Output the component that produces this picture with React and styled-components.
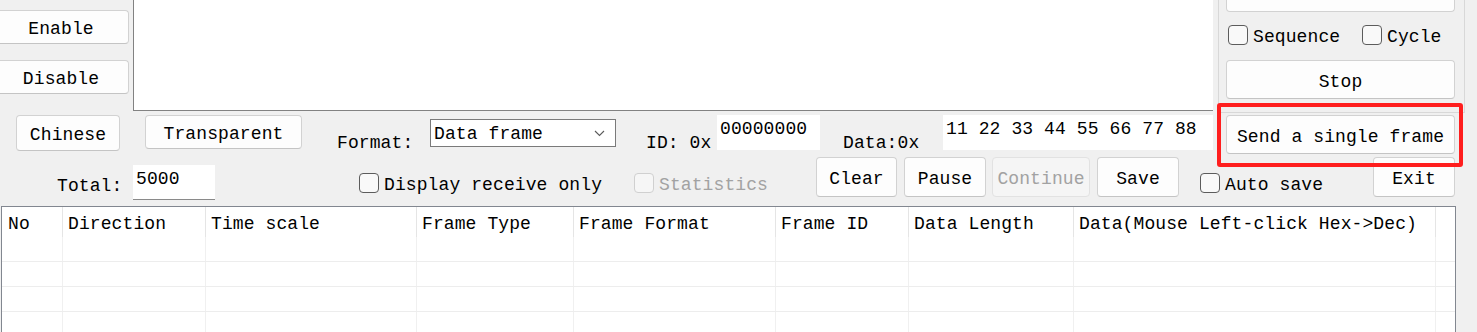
import React from "react";
import styled, { createGlobalStyle } from "styled-components";

const GlobalStyle = createGlobalStyle`
  html, body {
    margin: 0;
    padding: 0;
    background: #f0f0f0;
  }
  body {
    font-family: "Liberation Mono", "Courier New", monospace;
    font-size: 18px;
    letter-spacing: 0.1px;
    color: #000;
  }
`;

const Window = styled.div`
  position: relative;
  width: 1477px;
  height: 332px;
  overflow: hidden;
  background: #f0f0f0;
`;

const TopSection = styled.div`
  display: flex;
  height: 113px;
`;

const SideButtons = styled.div`
  width: 133px;
  flex: none;
  display: flex;
  flex-direction: column;
  gap: 16px;
  padding-top: 10px;
  box-sizing: border-box;
`;

const Button = styled.button`
  box-sizing: border-box;
  flex: none;
  display: flex;
  align-items: center;
  justify-content: center;
  font: inherit;
  letter-spacing: inherit;
  width: ${(p) => p.$w}px;
  height: ${(p) => p.$h || 36}px;
  margin-left: ${(p) => p.$ml || 0}px;
  margin-top: ${(p) => p.$mt || 0}px;
  padding: 4px 0 0;
  background: ${(p) => (p.disabled ? "#f5f5f5" : "#fdfdfd")};
  border: 1px solid ${(p) => (p.disabled ? "#e2e2e2" : "#d2d2d2")};
  border-bottom-color: ${(p) => (p.disabled ? "#e2e2e2" : "#c4c4c4")};
  border-radius: 4px;
  color: ${(p) => (p.disabled ? "#a2a2a2" : "#000")};
  line-height: 20px;
`;

const LogPanel = styled.div`
  flex: none;
  width: 1080px;
  height: 111px;
  box-sizing: border-box;
  background: #fff;
  border-left: 1px solid #828282;
  border-bottom: 1px solid #828282;
`;

const SendGroup = styled.div`
  flex: none;
  margin-left: 5px;
  width: 247px;
  height: 113px;
  box-sizing: border-box;
  border: 1px solid #d8d8d8;
  border-top: none;
  padding-left: 7px;
`;

const TopStub = styled.div`
  width: 229px;
  height: 12px;
  box-sizing: border-box;
  background: #fdfdfd;
  border: 1px solid #d2d2d2;
  border-top: none;
  border-radius: 0 0 4px 4px;
`;

const CheckRow = styled.div`
  display: flex;
  margin-top: 13px;
  height: 20px;
`;

const CheckLabel = styled.label`
  flex: none;
  display: flex;
  align-items: flex-start;
  gap: 5px;
  width: ${(p) => (p.$w ? `${p.$w}px` : "auto")};
  margin-left: ${(p) => p.$ml || 0}px;
  margin-top: ${(p) => p.$mt || 0}px;
  height: 20px;
  white-space: nowrap;
  color: ${(p) => (p.$disabled ? "#a2a2a2" : "#000")};
`;

const CheckText = styled.span`
  padding-top: 2px;
  line-height: 20px;
`;

const Box = styled.span`
  flex: none;
  width: 20px;
  height: 20px;
  box-sizing: border-box;
  border: 1px solid ${(p) => (p.$disabled ? "#d0d0d0" : "#5c5c5c")};
  border-radius: 4px;
  background: ${(p) => (p.$disabled ? "#f6f6f6" : "#f9f9f9")};
`;

const Row = styled.div`
  display: flex;
  align-items: flex-start;
  height: ${(p) => p.$h}px;
`;

const Label = styled.span`
  flex: none;
  width: ${(p) => p.$w}px;
  margin-left: ${(p) => p.$ml || 0}px;
  margin-top: ${(p) => p.$mt || 0}px;
  line-height: 20px;
  white-space: nowrap;
`;

const Field = styled.div`
  flex: none;
  box-sizing: border-box;
  width: ${(p) => p.$w}px;
  height: 35px;
  margin-left: ${(p) => p.$ml || 0}px;
  margin-top: ${(p) => p.$mt || 0}px;
  padding: 4px 0 0 3px;
  background: #fff;
  border-bottom: 1px solid ${(p) => (p.$line ? "#8a8a8a" : "#fff")};
  line-height: 20px;
  white-space: pre;
`;

const Select = styled.div`
  flex: none;
  box-sizing: border-box;
  display: flex;
  align-items: center;
  justify-content: space-between;
  width: 186px;
  height: 28px;
  margin-top: 6px;
  padding: 2px 10px 0 3px;
  background: #fff;
  border: 1px solid #7a7a7a;
  line-height: 20px;
`;

const Chevron = styled.svg`
  margin-top: -2px;
`;

const Highlight = styled.div`
  position: absolute;
  left: 1217px;
  top: 103px;
  width: 246px;
  height: 64px;
  box-sizing: border-box;
  border: 4px solid #ff1e1e;
  border-radius: 3px;
  pointer-events: none;
`;

const cols = "60px 143px 211px 157px 202px 133px 165px 362px 1fr";

const Table = styled.div`
  margin-left: 1px;
  width: 1455px;
  height: 130px;
  box-sizing: border-box;
  background: #fff;
  border: 1px solid #828790;
  border-bottom: none;
`;

const HeaderRow = styled.div`
  display: grid;
  grid-template-columns: ${cols};
  height: 30px;
`;

const HeadCell = styled.div`
  padding: 3px 0 0 ${(p) => (p.$first ? 6 : 5)}px;
  border-left: ${(p) => (p.$first ? "none" : "1px solid #e5e5e5")};
  line-height: 28px;
  white-space: nowrap;
  overflow: hidden;
`;

const BodyRow = styled.div`
  display: grid;
  grid-template-columns: ${cols};
  height: 25px;
  box-sizing: border-box;
  border-bottom: 1px solid #ededed;
`;

const BodyCell = styled.div`
  border-left: ${(p) => (p.$first ? "none" : "1px solid #f0f0f0")};
`;

const headers = [
  "No",
  "Direction",
  "Time scale",
  "Frame Type",
  "Frame Format",
  "Frame ID",
  "Data Length",
  "Data(Mouse Left-click Hex->Dec)",
  "",
];

function Check({ children, disabled, ...rest }) {
  return (
    <CheckLabel $disabled={disabled} {...rest}>
      <Box $disabled={disabled} />
      <CheckText>{children}</CheckText>
    </CheckLabel>
  );
}

export default function App() {
  return (
    <Window>
      <GlobalStyle />
      <TopSection>
        <SideButtons>
          <Button $w={136} $h={34} $ml={-7}>Enable</Button>
          <Button $w={136} $h={34} $ml={-7}>Disable</Button>
        </SideButtons>
        <LogPanel />
        <SendGroup>
          <TopStub />
          <CheckRow>
            <Check $ml={2} $w={134}>Sequence</Check>
            <Check>Cycle</Check>
          </CheckRow>
          <Button $w={229} $h={39} $mt={15}>Stop</Button>
        </SendGroup>
      </TopSection>

      <Row $h={42}>
        <Button $w={104} $ml={16} $mt={2}>Chinese</Button>
        <Button $w={157} $h={34} $ml={25} $mt={2}>Transparent</Button>
        <Label $w={93} $ml={35} $mt={20}>Format:</Label>
        <Select>
          <span>Data frame</span>
          <Chevron width="11" height="7" viewBox="0 0 11 7">
            <polyline points="1,1 5.5,5.5 10,1" fill="none" stroke="#5a5a5a" strokeWidth="1.1" />
          </Chevron>
        </Select>
        <Label $w={71} $ml={30} $mt={20}>ID: 0x</Label>
        <Field $w={103} $mt={2}>00000000</Field>
        <Label $w={100} $ml={23} $mt={20}>Data:0x</Label>
        <Field $w={270} $mt={2}>11 22 33 44 55 66 77 88</Field>
        <Button $w={229} $h={39} $ml={13} $mt={2}>Send a single frame</Button>
      </Row>

      <Row $h={51}>
        <Label $w={76} $ml={57} $mt={21}>Total:</Label>
        <Field $w={82} $mt={10} $line>5000</Field>
        <Check $ml={144} $mt={18} $w={275}>Display receive only</Check>
        <Check $mt={18} $w={182} disabled>Statistics</Check>
        <Button $w={81} $h={40} $mt={2}>Clear</Button>
        <Button $w={82} $h={40} $ml={7} $mt={2}>Pause</Button>
        <Button $w={98} $h={40} $ml={6} $mt={2} disabled>Continue</Button>
        <Button $w={82} $h={40} $ml={7} $mt={2}>Save</Button>
        <Check $ml={21} $mt={18} $w={173}>Auto save</Check>
        <Button $w={82} $h={40} $mt={2}>Exit</Button>
      </Row>

      <Table>
        <HeaderRow>
          {headers.map((h, i) => (
            <HeadCell key={i} $first={i === 0}>{h}</HeadCell>
          ))}
        </HeaderRow>
        {[0, 1, 2, 3].map((r) => (
          <BodyRow key={r}>
            {headers.map((_, i) => (
              <BodyCell key={i} $first={i === 0} />
            ))}
          </BodyRow>
        ))}
      </Table>

      <Highlight />
    </Window>
  );
}
